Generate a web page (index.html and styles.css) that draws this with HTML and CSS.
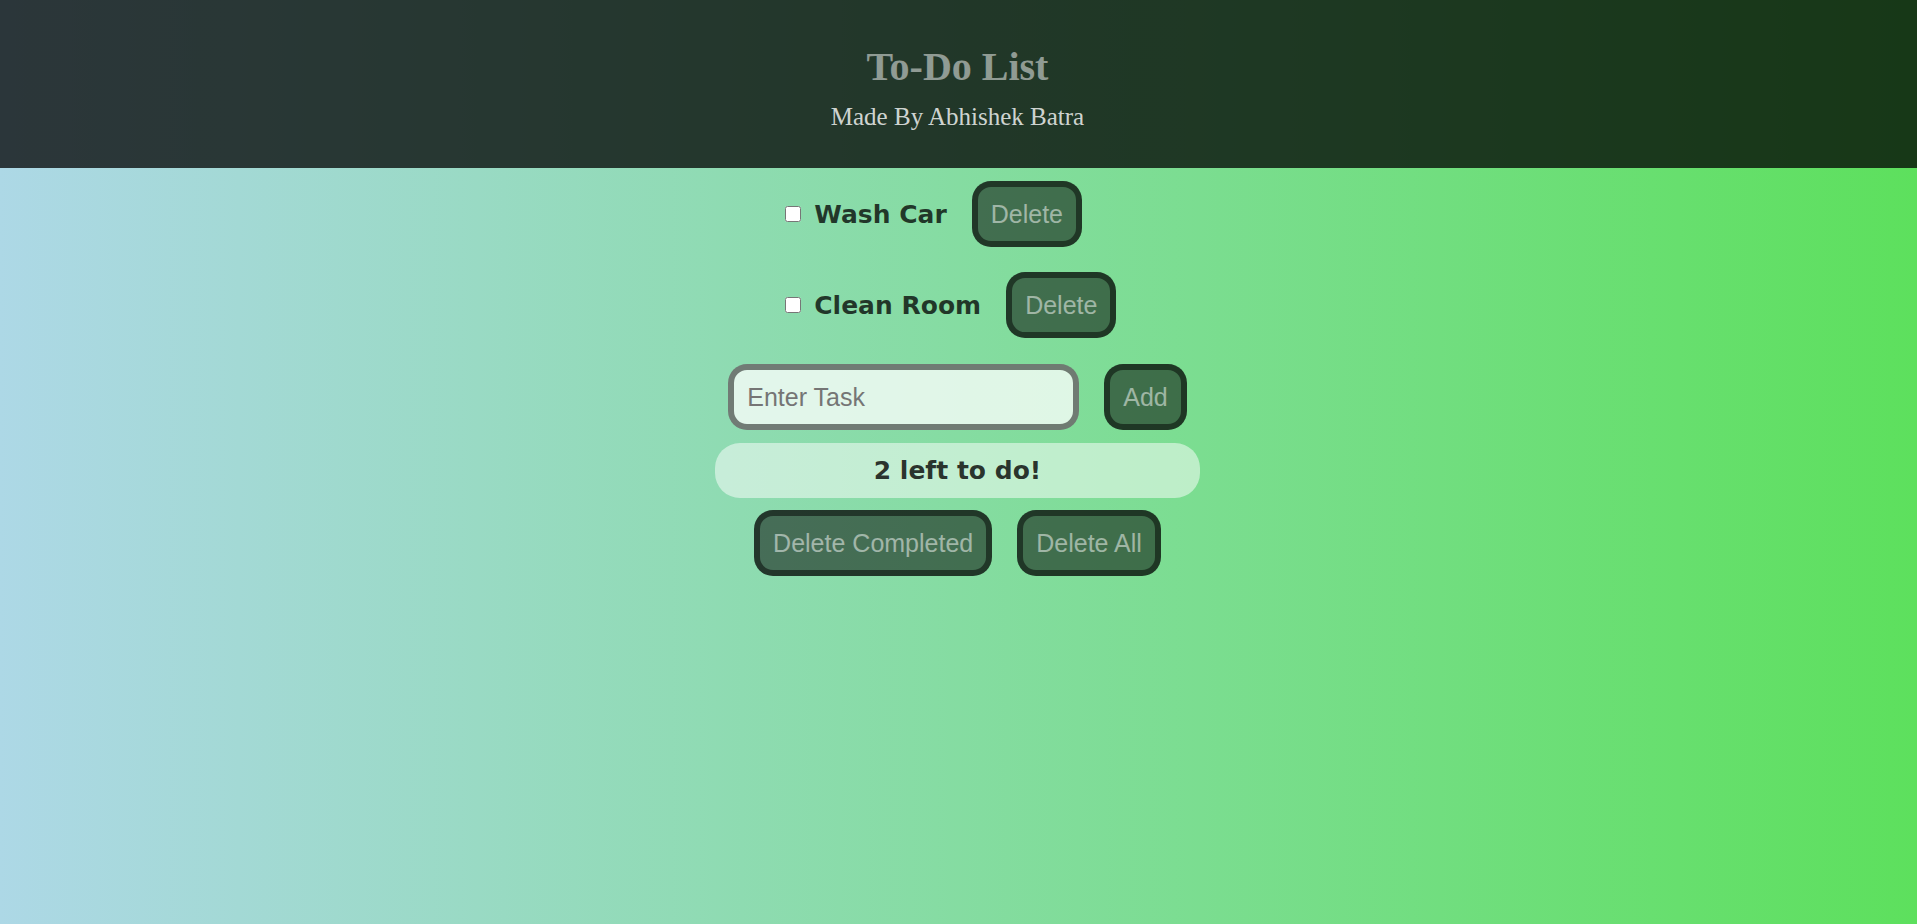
FILE: index.html
```html
<!DOCTYPE html>
<html lang="en">
<head>
<meta charset="utf-8">
<meta name="viewport" content="width=device-width, initial-scale=1">
<title>To-Do List</title>
<link rel="stylesheet" href="styles.css">
</head>
<body>
<header class="header">
  <h1 class="title">To-Do List</h1>
  <p class="byline">Made By Abhishek Batra</p>
</header>
<main class="app">
  <ul class="tasks">
    <li class="task">
      <input class="check" type="checkbox" id="task-1">
      <label class="name" for="task-1">Wash Car</label>
      <button class="button" type="button">Delete</button>
    </li>
    <li class="task">
      <input class="check" type="checkbox" id="task-2">
      <label class="name" for="task-2">Clean Room</label>
      <button class="button" type="button">Delete</button>
    </li>
  </ul>
  <form class="entry">
    <input class="field" type="text" placeholder="Enter Task" aria-label="Enter Task">
    <button class="button" type="button">Add</button>
  </form>
  <p class="status">2 left to do!</p>
  <div class="actions">
    <button class="button" type="button">Delete Completed</button>
    <button class="button" type="button">Delete All</button>
  </div>
</main>
</body>
</html>
```
FILE: styles.css
```css
* {
  box-sizing: border-box;
}

body {
  margin: 0;
  min-height: 100vh;
  background: linear-gradient(90deg, #add8e6, #5de05d);
  font-family: "Liberation Serif", "Times New Roman", serif;
  font-size: 25px;
}

.header {
  padding: 44px 18px 36px 16px;
  background: rgba(0, 0, 0, 0.75);
  text-align: center;
}

.title {
  margin: 0 0 12px;
  font-size: 40px;
  line-height: 46px;
  color: rgba(255, 255, 255, 0.5);
}

.byline {
  margin: 0;
  line-height: 30px;
  color: rgba(255, 255, 255, 0.8);
}

.app {
  width: fit-content;
  max-width: 100%;
  margin: 0 auto;
  padding: 13px 2px 0 0;
}

.tasks {
  margin: 0;
  padding: 0 0 1px 70px;
  list-style: none;
}

.task {
  display: flex;
  align-items: center;
  margin-bottom: 25px;
}

.check {
  width: 16px;
  height: 16px;
  margin: 0 13px 0 0;
}

.name {
  margin-right: 25px;
  font-family: "DejaVu Sans", Verdana, sans-serif;
  font-weight: bold;
  color: rgba(0, 0, 0, 0.75);
}

.button,
.field {
  padding: 13px;
  border: 6px solid rgba(0, 0, 0, 0.5);
  border-radius: 19px;
  font-family: "Liberation Sans", Arial, sans-serif;
  font-size: 25px;
  line-height: 28px;
}

.button {
  background: rgba(0, 0, 0, 0.5);
  color: rgba(255, 255, 255, 0.5);
}

.entry {
  display: flex;
  gap: 25px;
  padding: 0 13px;
}

.field {
  width: 351px;
  min-width: 0;
  height: 66px;
  background: rgba(255, 255, 255, 0.75);
}

.status {
  margin: 13px 0 12px;
  padding: 12px;
  border-radius: 25px;
  background: rgba(255, 255, 255, 0.5);
  font-family: "DejaVu Sans", Verdana, sans-serif;
  font-weight: bold;
  line-height: 31px;
  text-align: center;
  color: rgba(0, 0, 0, 0.8);
}

.actions {
  display: flex;
  justify-content: center;
  gap: 25px;
}
```
